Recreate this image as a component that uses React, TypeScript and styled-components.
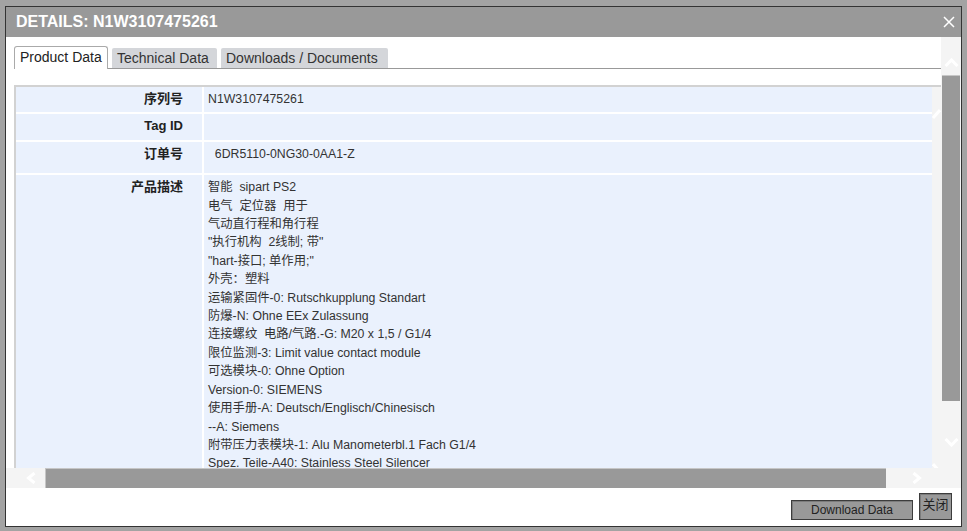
import styled, { createGlobalStyle } from 'styled-components'

const GlobalStyle = createGlobalStyle`
  html, body {
    margin: 0;
    padding: 0;
  }
  body {
    background: #a3a3a3;
    font-family: 'Liberation Sans', Arial, 'Noto Sans CJK SC', sans-serif;
    color: #333;
  }
`

const Screen = styled.div`
  width: 967px;
  height: 531px;
  box-sizing: border-box;
  padding: 6px 5px 0 5px;
  overflow: hidden;
`

const Dialog = styled.section`
  width: 957px;
  height: 521px;
  box-sizing: border-box;
  border: 1px solid #333;
  background: #fff;
  display: flex;
  flex-direction: column;
`

const TitleBar = styled.header`
  height: 30px;
  flex: none;
  background: #999;
  display: flex;
  align-items: center;
  justify-content: space-between;
  padding: 0 6px 0 10px;
  color: #fff;
  font-size: 16px;
  font-weight: bold;
`

const CloseButton = styled.button`
  border: 0;
  background: none;
  padding: 0;
  width: 12px;
  height: 12px;
  display: flex;
  cursor: pointer;
`

const Body = styled.div`
  height: 451px;
  flex: none;
  display: grid;
  grid-template-columns: 1fr 20px;
  grid-template-rows: 1fr 20px;
`

const Content = styled.div`
  overflow: hidden;
  padding: 9px 0 0 8px;
  min-width: 0;
  min-height: 0;
`

const TabStrip = styled.nav`
  display: flex;
  align-items: flex-end;
  gap: 4px;
  height: 22px;
  border-bottom: 1px solid #999;
`

const Tab = styled.div<{ $active?: boolean; $w: number }>`
  box-sizing: border-box;
  width: ${(p) => p.$w}px;
  font-size: 14px;
  padding: 0 0 0 5px;
  white-space: nowrap;
  cursor: pointer;
  ${(p) =>
    p.$active
      ? `
    height: 23px;
    line-height: 21px;
    margin-bottom: -1px;
    background: #fff;
    color: #222;
    border: 1px solid #aaa;
    border-bottom: none;
    border-radius: 3px 3px 0 0;
    position: relative;
    z-index: 1;
  `
      : `
    height: 20px;
    line-height: 20px;
    background: #d4d6da;
    color: #333;
    border-radius: 2px 2px 0 0;
  `}
`

const TableFrame = styled.div`
  margin-top: 16px;
  display: flex;
  border-top: 2px solid #d2d2d2;
  border-left: 2px solid #d2d2d2;
  height: 400px;
`

const Table = styled.table`
  flex: 1;
  border-collapse: collapse;
  align-self: flex-start;
`

const Label = styled.th`
  width: 167px;
  background: #eaf1fd;
  border-right: 2px solid #fff;
  border-bottom: 2px solid #fff;
  text-align: right;
  vertical-align: top;
  padding: 3px 19px 4px 0;
  line-height: 18.4px;
  font-size: 13px;
  font-weight: bold;
  color: #222;
`

const Value = styled.td<{ $extra?: number }>`
  background: #eaf1fd;
  border-bottom: 2px solid #fff;
  vertical-align: top;
  padding: 3px 4px ${(p) => 4 + (p.$extra ?? 0)}px 4px;
  line-height: 18.4px;
  font-size: 12.3px;
  color: #333;
`

const Line = styled.div`
  white-space: pre;
`

const InnerStrip = styled.div`
  width: 9px;
  flex: none;
  background: #f4f4f4;
  display: flex;
  flex-direction: column;
  justify-content: space-between;
  padding: 21px 0 13px;
`

const VScroll = styled.div`
  background: #f4f4f4;
  display: flex;
  flex-direction: column;
`

const VArrow = styled.div<{ $end?: boolean }>`
  height: 38px;
  flex: none;
  display: flex;
  justify-content: center;
  align-items: ${(p) => (p.$end ? 'flex-end' : 'flex-start')};
  box-sizing: border-box;
  padding: ${(p) => (p.$end ? '0 0 21px' : '21px 0 0')};
`

const VThumb = styled.div`
  height: 326px;
  margin: 0 1px;
  flex: none;
  background: #999;
  border-top: 1px solid #c6c6c6;
  box-sizing: border-box;
`

const Spacer = styled.div`
  flex: 1;
`

const HScroll = styled.div`
  background: #f4f4f4;
  display: flex;
  align-items: stretch;
`

const HArrow = styled.div<{ $end?: boolean }>`
  width: 39px;
  flex: none;
  display: flex;
  align-items: center;
  justify-content: ${(p) => (p.$end ? 'flex-end' : 'flex-start')};
  box-sizing: border-box;
  padding: ${(p) => (p.$end ? '0 19px 0 0' : '0 0 0 20px')};
`

const HThumb = styled.div`
  width: 841px;
  flex: none;
  background: #999;
  border-top: 1px solid #c6c6c6;
  border-left: 1px solid #c6c6c6;
  box-sizing: border-box;
`

const Corner = styled.div`
  background: #f4f4f4;
`

const Footer = styled.footer`
  flex: 1;
  display: flex;
  justify-content: flex-end;
  align-items: flex-end;
  gap: 6px;
  padding: 0 9px 6px 0;
`

const GrayButton = styled.button<{ $w: number; $h: number }>`
  width: ${(p) => p.$w}px;
  height: ${(p) => p.$h}px;
  box-sizing: border-box;
  background: #999;
  border: 1px solid #3c3c3c;
  box-shadow: inset 1px 1px 0 #7c7c7c;
  color: #222;
  font-family: 'Liberation Sans', Arial, 'Noto Sans CJK SC', sans-serif;
  font-size: 12px;
  padding: 0;
  display: flex;
  justify-content: center;
  align-items: center;
  cursor: pointer;
`

const CloseTextButton = styled(GrayButton)`
  font-size: 13px;
  align-items: flex-start;
  line-height: 17px;
  padding-top: 2px;
`

function Chevron({ dir }: { dir: 'up' | 'down' | 'left' | 'right' }) {
  const vertical = dir === 'up' || dir === 'down'
  const w = vertical ? 15 : 10
  const h = vertical ? 9 : 12
  const points =
    dir === 'up'
      ? '1.5,8 7.5,2 13.5,8'
      : dir === 'down'
        ? '1.5,1 7.5,7 13.5,1'
        : dir === 'left'
          ? '8.5,1 2.5,6 8.5,11'
          : '1.5,1 7.5,6 1.5,11'
  return (
    <svg width={w} height={h} viewBox={`0 0 ${w} ${h}`}>
      <polyline points={points} fill="none" stroke="#fff" strokeWidth="3" />
    </svg>
  )
}

function HalfChevron({ dir }: { dir: 'up' | 'down' }) {
  return (
    <svg width="9" height="11" viewBox="0 0 9 11">
      <polyline
        points={dir === 'up' ? '1,10 8,2' : '1,1 8,9'}
        fill="none"
        stroke="#fff"
        strokeWidth="3"
      />
    </svg>
  )
}

const description = [
  '智能  sipart PS2',
  '电气  定位器  用于',
  '气动直行程和角行程',
  '"执行机构  2线制; 带"',
  '"hart-接口; 单作用;"',
  '外壳：塑料',
  '运输紧固件-0: Rutschkupplung Standart',
  '防爆-N: Ohne EEx Zulassung',
  '连接螺纹  电路/气路.-G: M20 x 1,5 / G1/4',
  '限位监测-3: Limit value contact module',
  '可选模块-0: Ohne Option',
  'Version-0: SIEMENS',
  '使用手册-A: Deutsch/Englisch/Chinesisch',
  '--A: Siemens',
  '附带压力表模块-1: Alu Manometerbl.1 Fach G1/4',
  'Spez. Teile-A40: Stainless Steel Silencer',
]

export default function App() {
  return (
    <>
      <GlobalStyle />
      <Screen>
        <Dialog>
          <TitleBar>
            <span>DETAILS: N1W3107475261</span>
            <CloseButton title="close">
              <svg width="12" height="12" viewBox="0 0 12 12">
                <path d="M1 1 L11 11 M11 1 L1 11" stroke="#fff" strokeWidth="1.5" />
              </svg>
            </CloseButton>
          </TitleBar>

          <Body>
            <Content>
              <TabStrip>
                <Tab $active $w={94}>Product Data</Tab>
                <Tab $w={105}>Technical Data</Tab>
                <Tab $w={167}>Downloads / Documents</Tab>
              </TabStrip>

              <TableFrame>
                <Table>
                  <tbody>
                    <tr>
                      <Label>序列号</Label>
                      <Value>N1W3107475261</Value>
                    </tr>
                    <tr>
                      <Label>Tag ID</Label>
                      <Value></Value>
                    </tr>
                    <tr>
                      <Label>订单号</Label>
                      <Value $extra={6}>{'\u00a0 6DR5110-0NG30-0AA1-Z'}</Value>
                    </tr>
                    <tr>
                      <Label>产品描述</Label>
                      <Value>
                        {description.map((line) => (
                          <Line key={line}>{line}</Line>
                        ))}
                      </Value>
                    </tr>
                  </tbody>
                </Table>
                <InnerStrip>
                  <HalfChevron dir="up" />
                  <HalfChevron dir="down" />
                </InnerStrip>
              </TableFrame>
            </Content>

            <VScroll>
              <VArrow>
                <Chevron dir="up" />
              </VArrow>
              <VThumb />
              <Spacer />
              <VArrow $end>
                <Chevron dir="down" />
              </VArrow>
            </VScroll>

            <HScroll>
              <HArrow>
                <Chevron dir="left" />
              </HArrow>
              <HThumb />
              <Spacer />
              <HArrow $end>
                <Chevron dir="right" />
              </HArrow>
            </HScroll>

            <Corner />
          </Body>

          <Footer>
            <GrayButton $w={122} $h={20}>Download Data</GrayButton>
            <CloseTextButton $w={33} $h={27}>关闭</CloseTextButton>
          </Footer>
        </Dialog>
      </Screen>
    </>
  )
}
